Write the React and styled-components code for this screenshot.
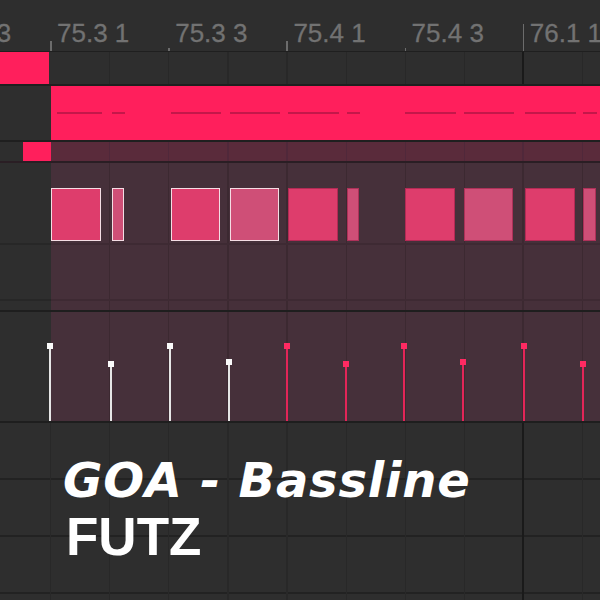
import React from "react";
import styled, { createGlobalStyle, css } from "styled-components";

const BEAT = 59.1;
const GUTTER = 51;

const col = {
  bg: "#2e2e2e",
  sep: "#1f1f1f",
  beat: "#282828",
  bar: "#1a1a1a",
  pink: "#ff1f5c",
  dash: "#c4174a",
  loop: "#5a2b3b",
  loopBeat: "#50283a",
  region: "#46303a",
  regionBeat: "#3c2931",
  regionRow: "#3e2a33",
  note: "#de3d6c",
  noteSoft: "#cf4f77",
  outline: "#f4dde4",
  tick: "#6c6c6c",
  label: "#727272",
};

const GlobalStyle = createGlobalStyle`
  html, body { margin: 0; padding: 0; background: ${col.bg}; }
  #root { width: 600px; height: 600px; }
`;

/* vertical beat lines for a track that starts at the gutter edge */
const beatGrid = (line, bar) => css`
  background-image:
    linear-gradient(to right, transparent 471px, ${bar} 471px, ${bar} 473px, transparent 473px),
    repeating-linear-gradient(to right, ${line} 0 1.2px, transparent 1.2px ${BEAT}px);
  background-position: 0 0, -1px 0;
  background-size: 100% 100%, calc(100% + 2px) 100%;
  background-repeat: no-repeat;
`;

/* faint key-row separators inside the piano roll */
const keyRows = (line) => css`
  background-image:
    linear-gradient(to bottom, transparent 80px, ${line} 80px, ${line} 81.5px, transparent 81.5px,
      transparent 136px, ${line} 136px, ${line} 137.5px, transparent 137.5px);
`;

const Screen = styled.div`
  width: 600px;
  height: 600px;
  overflow: hidden;
  background: ${col.bg};
  display: flex;
  flex-direction: column;
  font-family: "Liberation Sans", Arial, sans-serif;
`;

/* ---------- time ruler ---------- */
const Ruler = styled.div`
  flex: none;
  height: 51px;
  border-bottom: 1px solid ${col.sep};
  overflow: hidden;
`;

const RulerStrip = styled.div`
  display: flex;
  height: 100%;
  margin-left: -68.2px;
`;

const RulerSegment = styled.div`
  flex: none;
  width: 118.2px;
  height: 100%;
  display: grid;
  grid-template-columns: 7px auto;
`;

const tickHeights = { bar: 27, beat: 10, sub: 3 };

const Tick = styled.div`
  align-self: end;
  width: 1.5px;
  height: ${(p) => tickHeights[p.$kind]}px;
  background: ${col.tick};
`;

const RulerLabel = styled.span`
  padding-top: 20px;
  font-size: 26px;
  line-height: 26px;
  color: ${col.label};
  white-space: nowrap;
  -webkit-text-stroke: 0.3px ${col.label};
`;

/* ---------- lanes ---------- */
const Lane = styled.div`
  flex: none;
  height: ${(p) => p.$h}px;
  border-bottom: 2px solid ${(p) => p.$edge || col.sep};
  display: grid;
  grid-template-columns: ${GUTTER}px 1fr;
`;

const Gutter = styled.div`
  background-color: ${col.bg};
  display: flex;
  justify-content: ${(p) => (p.$end ? "flex-end" : "flex-start")};
  ${(p) => p.$rows && keyRows("#272727")}
`;

const GutterClip = styled.div`
  width: ${(p) => p.$w}px;
  height: 100%;
  background: ${col.pink};
`;

const Track = styled.div`
  position: relative;
  background-color: ${(p) => p.$fill};
  ${(p) => p.$grid && beatGrid(p.$grid, p.$bar || p.$grid)}
`;

const RegionTrack = styled.div`
  position: relative;
  background-color: ${col.region};
  ${beatGrid(col.regionBeat, col.regionBeat)}
`;

const RowOverlay = styled.div`
  position: absolute;
  inset: 0;
  pointer-events: none;
  ${keyRows(col.regionRow)}
`;

const ClipBody = styled.div`
  position: relative;
  background: ${col.pink};
`;

const ClipDash = styled.div`
  position: absolute;
  top: 26px;
  height: 2px;
  background: ${col.dash};
`;

const Note = styled.div`
  position: absolute;
  top: 25px;
  height: 53px;
  box-sizing: border-box;
  background: ${(p) => (p.$soft ? col.noteSoft : col.note)};
  border: ${(p) => (p.$sel ? `1.5px solid ${col.outline}` : "1px solid rgba(150, 30, 70, 0.6)")};
`;

const Stem = styled.div`
  position: absolute;
  bottom: 0;
  width: 2px;
  background: ${(p) => (p.$sel ? "#e6e6e6" : "#e32558")};

  &::before {
    content: "";
    position: absolute;
    left: -2px;
    top: -3px;
    width: 6px;
    height: 6px;
    background: ${(p) => (p.$sel ? "#fafafa" : "#ff2a62")};
  }
`;

/* ---------- lower empty lanes + title ---------- */
const Footer = styled.div`
  flex: 1;
  box-sizing: border-box;
  padding: 33px 0 0 63px;
  background-image:
    linear-gradient(to right, transparent 522px, ${col.bar} 522px, ${col.bar} 524px, transparent 524px),
    repeating-linear-gradient(to right, ${col.beat} 0 1.2px, transparent 1.2px ${BEAT}px),
    repeating-linear-gradient(to bottom, transparent 0 55px, #222 55px 57px, transparent 57px 56.6px);
  background-position: 0 0, 50px 0, 0 0;
  background-size: 100% 100%, 560px 100%, 100% 100%;
  background-repeat: no-repeat;
`;

const Title = styled.div`
  font-family: "DejaVu Sans", sans-serif;
  font-weight: 700;
  font-style: italic;
  font-size: 48px;
  line-height: 48px;
  letter-spacing: 0.8px;
  color: #fff;
  white-space: nowrap;
`;

const Subtitle = styled.div`
  margin-top: 6px;
  padding-left: 3px;
  font-family: "Liberation Sans", Arial, sans-serif;
  font-weight: 700;
  font-size: 53px;
  line-height: 53px;
  color: #fff;
`;

const MARKS = [
  { label: "75.2 3", kind: "sub" },
  { label: "75.3 1", kind: "beat" },
  { label: "75.3 3", kind: "sub" },
  { label: "75.4 1", kind: "beat" },
  { label: "75.4 3", kind: "sub" },
  { label: "76.1 1", kind: "bar" },
];

/* x is the page column of each note; stem sits on the note start, v is its height */
const NOTES = [
  { x: 51, w: 50, sel: true, stem: 50, v: 75 },
  { x: 112, w: 12, sel: true, soft: true, stem: 111, v: 57 },
  { x: 171, w: 49, sel: true, stem: 170, v: 75 },
  { x: 230, w: 49, sel: true, soft: true, stem: 228.5, v: 59 },
  { x: 288, w: 50, stem: 287, v: 75 },
  { x: 347, w: 12, soft: true, stem: 345.7, v: 57 },
  { x: 405, w: 50, stem: 404, v: 75 },
  { x: 464, w: 49, soft: true, stem: 462.7, v: 59 },
  { x: 525, w: 50, stem: 523.7, v: 75 },
  { x: 583, w: 13, soft: true, stem: 582.7, v: 57 },
];

export default function App() {
  return (
    <>
      <GlobalStyle />
      <Screen>
        <Ruler>
          <RulerStrip>
            {MARKS.map((m) => (
              <RulerSegment key={m.label}>
                <Tick $kind={m.kind} />
                <RulerLabel>{m.label}</RulerLabel>
              </RulerSegment>
            ))}
          </RulerStrip>
        </Ruler>

        <Lane $h={32}>
          <Gutter>
            <GutterClip $w={49} />
          </Gutter>
          <Track $fill={col.bg} $grid={col.beat} $bar={col.bar} />
        </Lane>

        <Lane $h={54}>
          <Gutter />
          <ClipBody>
            {NOTES.map((n) => {
              const start = Math.max(n.x, 57);
              return (
                <ClipDash
                  key={n.x}
                  style={{ left: start - GUTTER, width: n.x + n.w + 1 - start }}
                />
              );
            })}
          </ClipBody>
        </Lane>

        <Lane $h={19} $edge="#2a1e24">
          <Gutter $end>
            <GutterClip $w={28} />
          </Gutter>
          <Track $fill={col.loop} $grid={col.loopBeat} />
        </Lane>

        <Lane $h={147} $edge="#1e1e1e">
          <Gutter $rows />
          <RegionTrack>
            <RowOverlay />
            {NOTES.map((n) => (
              <Note
                key={n.x}
                $sel={n.sel}
                $soft={n.soft}
                style={{ left: n.x - GUTTER, width: n.w }}
              />
            ))}
          </RegionTrack>
        </Lane>

        <Lane $h={109} $edge="#1e1e1e">
          <Gutter />
          <RegionTrack>
            {NOTES.map((n) => (
              <Stem
                key={n.x}
                $sel={n.sel}
                style={{ left: n.stem - 1 - GUTTER, height: n.v }}
              />
            ))}
          </RegionTrack>
        </Lane>

        <Footer>
          <Title>GOA - Bassline</Title>
          <Subtitle>FUTZ</Subtitle>
        </Footer>
      </Screen>
    </>
  );
}
